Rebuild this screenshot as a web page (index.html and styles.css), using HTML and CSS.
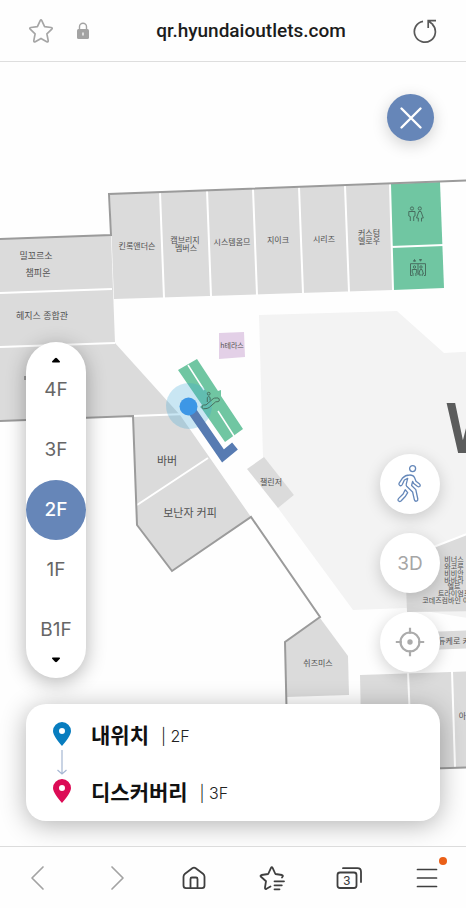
FILE: index.html
```html
<!DOCTYPE html>
<html lang="ko">
<head>
<meta charset="utf-8">
<meta name="viewport" content="width=device-width, initial-scale=1">
<title>qr.hyundaioutlets.com</title>
<link rel="stylesheet" href="styles.css">
</head>
<body>
<header class="topbar">
  <button class="icon-btn topbar-star" aria-label="즐겨찾기">
    <svg width="26" height="26" viewBox="0 0 26 26" fill="none" stroke="#a6a6a6" stroke-width="1.7" stroke-linejoin="round"><path d="M12.2 2.6Q13 1.2 13.8 2.6L16.6 8.7L23.2 9.5Q24.9 9.9 23.8 11.1L18.9 15.8L20.2 22.6Q20.3 24.4 18.7 23.7L13 20.4L7.300 23.7Q5.700 24.400 5.800 22.600L7.100 15.800L2.200 11.100Q1.100 9.900 2.800 9.500L9.400 8.700Z"/></svg>
  </button>
  <svg class="lock" width="14" height="18" viewBox="0 0 14 18"><path d="M3.500 8V4.800a3.500 3.500 0 0 1 7 0V8" fill="none" stroke="#a3a3a3" stroke-width="1.400"/><rect x="1" y="7" width="12" height="10" rx="1.500" fill="#a3a3a3"/><path d="M7 10.500v3" stroke="#fff" stroke-width="1.300"/></svg>
  <h1 class="address">qr.hyundaioutlets.com</h1>
  <button class="icon-btn topbar-reload" aria-label="새로고침">
    <svg width="26" height="26" viewBox="0 0 26 26" fill="none" stroke="#585858" stroke-width="1.700"><path d="M11 3.300A10.500 10.500 0 1 0 20.400 6.300"/><path d="M24 2.700H16.200V10M16.500 3L21 6.700"/></svg>
  </button>
</header>

<main class="map">
  <svg class="plan" viewBox="0 62 466 784" preserveAspectRatio="xMidYMid slice" role="img" aria-label="2F 매장 지도">
    <path class="hall" d="M259 315L397 311L444 353L480 351V620L406 608L353 610L278 508L294 495L263 457Z"/>
    <g class="store">
      <path d="M110 194L390 184L393 290L114 299Z"/>
      <path d="M0 239L111 235L115 343L180 415L251 517L172 571L137 525L133 416L0 421Z"/>
      <path d="M247 469L264 457L294 495L278 508Z"/>
      <path d="M320 618L348 656L349 695L286 697L285 642Z"/>
      <path d="M405 558L480 529V611L407 612Z"/>
      <path d="M400 633L480 630V648L400 651Z"/>
      <path d="M360 675L480 671V767L362 771Z"/>
    </g>
    <path class="amenity" d="M390 184L440 182L444 288L393 290Z"/>
    <path class="terrace" d="M219 333L244 332L245 357L219 359Z"/>
    <path class="seam" d="M160 192L164 298M207 190L211 296M253 189L257 295M299 187L303 293M345 186L349 292M390 184L393 290M391 247L444 245M0 293L112 289M0 347L115 343M133 416L186 414M137 505L208 458M405 558L480 529M408 672L412 768M452 671L455 767"/>
    <path class="wall" d="M480 180L109 194L111 235L0 239M0 421L133 416L137 525L172 571L251 517L320 617L285 642L288 773L480 767"/>
    <path d="M25 376v4" stroke="#555" stroke-width="1"/>

    <path class="amenity" d="M178 370L197 359L218 391L221 390L221 396L243 429L225 442L202 409L200 407L202 405Z"/>
    <path d="M188 365L204 390M218 411L234 436" stroke="#fff" stroke-width="1.500"/>
    <circle cx="189" cy="406" r="23" fill="#3ba6d8" fill-opacity=".27"/>
    <path d="M190 408L223 456L235 446" fill="none" stroke="#577bb2" stroke-width="9"/>
    <circle cx="188.500" cy="406.500" r="9" fill="#3d97e6"/>

    <g class="glyph">
      <circle cx="208.700" cy="393.700" r="1.400"/>
      <path d="M207.300 402v-4.500q1.400-2 2.800 0v3M203.500 408.800q-2.500-.8-1.200-3q.7-1 3.700-.9l7.200-6.200q1-.8 3-.7h2q1.500.5 1 3q-.3.900-3.500.8l-6.500 5.700q-1.300 1.200-5.700 1.300"/>
      <circle cx="412" cy="208.500" r="1.600"/><circle cx="419.800" cy="208.500" r="1.600"/>
      <path d="M410.300 221v-4.500l-1.500-.5v-4.500h6.200v4.500l-1.300.5v4.500M418.300 221.500v-3.500h-1.800l2.300-6.500h2.200l2.300 6.500h-1.800v3.500"/>
      <path d="M412 275.500h-1.500v-11.800h15v11.800H424M418 264v11"/>
      <circle cx="414.500" cy="267" r="1.200"/><circle cx="421" cy="267" r="1.200"/>
      <path d="M413 276v-3l-.8-.5v-3h4.500v3l-.8.500v3M420 276v-2h-1.300l1.500-4.500h1.800l1.500 4.500h-1.300v2"/>
      <path d="M414.500 259.500l-1 1.700h2zM420.500 261.200l-1-1.700h2z" fill="#486f60"/>
    </g>

    <g class="label label-xl"><text x="167" y="465">바버</text><text x="190" y="517">보난자 커피</text></g>
    <g class="label label-lg"><text x="36" y="259">밀꼬르소</text><text x="38" y="276">챔피온</text><text x="42" y="319">헤지스 종합관</text></g>
    <g class="label label-md">
      <text x="137" y="249">킨록앤더슨</text>
      <text x="185" y="243">캠브리지</text><text x="186" y="251">멤버스</text>
      <text x="232" y="245">시스템옴므</text><text x="278" y="243">지이크</text><text x="324" y="242">시리즈</text>
      <text x="369" y="236">커스텀</text><text x="369" y="244">멜로우</text>
      <text x="271" y="485">챌린저</text><text x="318" y="666">쉬즈미스</text>
      <text x="454" y="644">듀케로 카</text><text x="466" y="719">아디</text>
    </g>
    <g class="label label-sm">
      <text x="232" y="348">h테라스</text>
      <text x="454" y="562">비너스</text><text x="454" y="569">와코루</text><text x="454" y="576">비비안</text><text x="454" y="583">바바라</text><text x="454" y="589">엘르</text><text x="454" y="596">트라이엄프</text><text x="449" y="603">코데즈컴바인 이너</text>
    </g>
    <text class="hall-name" x="445" y="453">W</text>
  </svg>

  <button class="round close" aria-label="닫기">
    <svg width="24" height="24" viewBox="0 0 24 24" stroke="#fff" stroke-width="2.400" stroke-linecap="round"><path d="M2.500 2.500L21.500 21.500M21.500 2.500L2.500 21.500"/></svg>
  </button>

  <div class="overlay">
    <div class="controls">
      <nav class="floors" aria-label="층 선택">
        <button class="step step-up" aria-label="위층"><svg width="10" height="6" viewBox="0 0 10 6"><path d="M1 7.500L4 4.200Q5 3.300 6 4.200L9 7.500Q9.200 8.500 8.200 8.500H1.800Q.8 8.500 1 7.500Z"/></svg></button>
        <button class="floor">4F</button>
        <button class="floor">3F</button>
        <button class="floor is-current" aria-current="true">2F</button>
        <button class="floor">1F</button>
        <button class="floor">B1F</button>
        <button class="step step-down" aria-label="아래층"><svg width="10" height="6" viewBox="0 0 10 6"><path d="M1-1.500L4 1.800Q5 2.700 6 1.800L9-1.500Q9.200-2.500 8.200-2.500H1.800Q.8-2.500 1-1.500Z"/></svg></button>
      </nav>
      <div class="tools">
        <button class="round tool" aria-label="도보 안내">
          <svg width="26" height="40" viewBox="0 0 26 40" fill="none" stroke="#6487b9" stroke-width="1.300" stroke-linejoin="round"><circle cx="15.600" cy="4.600" r="3"/><path d="M5.300 14.300Q8.500 11 12.500 11Q16 10.800 17.500 13.500L19 17.300L22.300 19.800Q24 21.300 22.600 22.500Q21.600 23.200 20.300 22.300L16.700 19.600L15.600 17.400L14.600 21.500L18.800 25.600L20.800 35Q21 37 19.500 37.200Q17.900 37.500 17.400 35.800L15.600 28L9.700 22.300Q8.900 21.400 9.300 19.800L10.700 14.300L7.400 16L5.300 20.500Q4.400 22.100 3 21.600Q1.500 20.900 2 19.300Z"/><path d="M8.200 25.800L10.700 28.600L8.500 32.200L4 37Q2.500 38 1.400 36.900Q.5 35.700 1.700 34.400L6.100 30Z"/></svg>
        </button>
        <button class="round tool">3D</button>
        <button class="round tool" aria-label="현재 위치">
          <svg width="30" height="30" viewBox="0 0 30 30" fill="none" stroke="#ababab" stroke-width="2.200"><circle cx="15" cy="15" r="9.500"/><path d="M15 .800v6M15 23.200v6M.8 15h6M23.200 15h6"/><circle cx="15" cy="15" r="2.700" fill="#ababab" stroke="none"/></svg>
        </button>
      </div>
    </div>

    <section class="route" aria-label="경로">
      <div class="stop">
        <svg class="pin pin-start" width="20" height="26" viewBox="0 0 20 26"><path fill-rule="evenodd" d="M10 1a9 9 0 0 0-9 9c0 4 4.500 9.500 9 15c4.500-5.500 9-11 9-15a9 9 0 0 0-9-9Zm0 6a3 3 0 1 1 0 6a3 3 0 0 1 0-6Z"/></svg>
        <strong class="place">내위치</strong><span class="level">| 2F</span>
      </div>
      <svg class="arrow" width="20" height="25" viewBox="0 0 20 25" fill="none" stroke="#a6b7d3" stroke-width="1.200"><path d="M10 0v24M5.500 20L10 24L14.500 20"/></svg>
      <div class="stop">
        <svg class="pin pin-end" width="20" height="26" viewBox="0 0 20 26"><path fill-rule="evenodd" d="M10 1a9 9 0 0 0-9 9c0 4 4.500 9.500 9 15c4.500-5.500 9-11 9-15a9 9 0 0 0-9-9Zm0 6a3 3 0 1 1 0 6a3 3 0 0 1 0-6Z"/></svg>
        <strong class="place">디스커버리</strong><span class="level">| 3F</span>
      </div>
    </section>
  </div>
</main>

<nav class="bottombar" aria-label="브라우저 도구">
  <button class="icon-btn" aria-label="뒤로"><svg width="28" height="28" viewBox="0 0 28 28" fill="none" stroke="#a3a3a3" stroke-width="1.700" stroke-linecap="round" stroke-linejoin="round"><path d="M18 3L7 14L18 25"/></svg></button>
  <button class="icon-btn" aria-label="앞으로"><svg width="28" height="28" viewBox="0 0 28 28" fill="none" stroke="#a3a3a3" stroke-width="1.700" stroke-linecap="round" stroke-linejoin="round"><path d="M10 3L21 14L10 25"/></svg></button>
  <button class="icon-btn" aria-label="홈"><svg width="28" height="28" viewBox="0 0 28 28" fill="none" stroke="#3f3f3f" stroke-width="1.800" stroke-linejoin="round"><path d="M3.500 12.800Q3.500 11 5 9.700L12.300 4.200Q14 3 15.700 4.200L23 9.700Q24.500 11 24.500 12.800V21.500Q24.500 24.200 22 24.200H6Q3.500 24.200 3.500 21.500Z"/><path d="M10.500 24V15Q10.500 13.500 12 13.500H16Q17.500 13.500 17.500 15V24"/></svg></button>
  <button class="icon-btn" aria-label="북마크"><svg width="28" height="28" viewBox="0 0 28 28" fill="none" stroke="#3f3f3f" stroke-width="1.800" stroke-linecap="round" stroke-linejoin="round"><path d="M12.500 22.500L8.500 24.800Q6.700 25.500 7 23.500L8 17.200L3 12.800Q1.800 11.500 3.500 11L10.200 10L13 3.800Q13.800 2.300 14.600 3.800L17.400 10L24 11Q25.500 11.500 24.500 12.800L24 13.500M16.500 17.300H26M16.500 21.300H23.800M16.500 25.300H21.500"/></svg></button>
  <button class="icon-btn" aria-label="탭 3개"><svg width="30" height="28" viewBox="0 0 30 28" fill="none" stroke="#3f3f3f" stroke-width="1.800" stroke-linecap="round"><rect x="3.500" y="8.500" width="19" height="15.500" rx="2.500"/><path d="M9 4.200H23.500Q27 4.200 27 7.700V18"/><text class="tab-count" x="13" y="20.500">3</text></svg></button>
  <button class="icon-btn menu-btn" aria-label="메뉴"><svg width="28" height="28" viewBox="0 0 28 28" stroke="#3f3f3f" stroke-width="1.700" stroke-linecap="round"><path d="M4.500 5.500H23.500M4.500 14H23.500M4.500 22.500H23.500"/></svg><span class="badge"></span></button>
</nav>
</body>
</html>
```
FILE: styles.css
```css
* {
  box-sizing: border-box;
}

body {
  margin: 0;
  min-height: 100vh;
  display: flex;
  flex-direction: column;
  background: #fefefe;
  color: #1c1c1c;
  font-family: Roboto, "Noto Sans CJK KR", sans-serif;
}

button {
  margin: 0;
  padding: 0;
  border: 0;
  background: none;
  color: inherit;
  font: inherit;
  cursor: pointer;
}

.icon-btn {
  display: flex;
  align-items: center;
  justify-content: center;
}

.topbar {
  display: flex;
  align-items: center;
  height: 62px;
  padding: 0 28px;
  border-bottom: 1px solid #dedede;
}

.lock {
  margin-left: 22px;
}

.address {
  flex: 1;
  margin: 0;
  text-align: center;
  font-size: 19px;
  font-weight: 500;
  line-height: 24px;
}

.map {
  position: relative;
  flex: 1;
  display: flex;
  flex-direction: column;
  justify-content: flex-end;
  min-height: 640px;
  overflow: hidden;
}

.plan {
  position: absolute;
  inset: 0;
  width: 100%;
  height: 100%;
}

.hall { fill: #f3f3f3; }
.store { fill: #dbdbdb; }
.amenity { fill: #70c6a2; }
.terrace { fill: #e3d0e7; }

.seam {
  fill: none;
  stroke: #fff;
  stroke-width: 2px;
}

.wall {
  fill: none;
  stroke: #9b9b9b;
  stroke-width: 2px;
}

.glyph {
  fill: none;
  stroke: #486f60;
  stroke-width: 1px;
}

.label {
  fill: #505050;
  font-family: "Noto Sans CJK KR", sans-serif;
  text-anchor: middle;
}

.label-xl { font-size: 11px; }
.label-lg { font-size: 9px; }
.label-md { font-size: 8px; }
.label-sm { font-size: 7px; }

.hall-name {
  fill: #5b5c5c;
  font-size: 70px;
  font-weight: 500;
}

.round {
  display: flex;
  align-items: center;
  justify-content: center;
  border-radius: 50%;
  box-shadow: 0 4px 16px rgba(0, 0, 0, .18);
}

.close {
  position: absolute;
  top: 32px;
  right: 32px;
  width: 47px;
  height: 47px;
  background: #6686b8;
}

.overlay {
  position: relative;
  display: flex;
  flex-direction: column;
  gap: 26px;
  padding: 0 26px 25px;
}

.controls {
  display: flex;
  align-items: flex-end;
  justify-content: space-between;
}

.floors {
  display: flex;
  flex-direction: column;
  width: 60px;
  border-radius: 30px;
  background: #fff;
  box-shadow: 0 4px 20px rgba(0, 0, 0, .3);
}

.floor {
  height: 60px;
  border-radius: 50%;
  color: #666;
  font-family: Inter, sans-serif;
  font-size: 19px;
  line-height: 24px;
}

.floor.is-current {
  background: #6686b8;
  color: #fff;
  font-weight: 500;
}

.step {
  display: flex;
  justify-content: center;
  height: 18px;
}

.step svg {
  overflow: visible;
}

.step-up { align-items: flex-end; }
.step-down { align-items: flex-start; }

.tools {
  display: flex;
  flex-direction: column;
  gap: 19px;
  padding-bottom: 6px;
}

.tool {
  width: 60px;
  height: 60px;
  background: #fff;
  color: #a6a6a6;
  font-family: Inter, sans-serif;
  font-size: 19px;
}

.route {
  padding: 16px 26px;
  border-radius: 20px;
  background: #fff;
  box-shadow: 0 4px 26px rgba(0, 0, 0, .3);
}

.stop {
  display: flex;
  align-items: center;
  height: 28px;
}

.pin-start { fill: #087dbf; }
.pin-end { fill: #dc0c56; }

.arrow {
  display: block;
  margin: 2px 0;
}

.place {
  margin: 0 12px 0 19px;
  color: #111;
  font-family: "Noto Sans CJK KR", sans-serif;
  font-size: 21px;
  font-weight: 700;
  line-height: 28px;
}

.level {
  padding-top: 4px;
  color: #222;
  font-family: Inter, sans-serif;
  font-size: 16px;
  font-weight: 300;
  line-height: 24px;
}

.bottombar {
  display: grid;
  grid-template-columns: repeat(6, 1fr);
  height: 62px;
  border-top: 1px solid #dcdcdc;
}

.tab-count {
  fill: #3f3f3f;
  stroke: none;
  font-size: 13px;
  text-anchor: middle;
}

.menu-btn {
  position: relative;
}

.badge {
  position: absolute;
  top: 10px;
  left: 50%;
  width: 8px;
  height: 8px;
  margin-left: 12px;
  border-radius: 50%;
  background: #ea5f17;
}
```
